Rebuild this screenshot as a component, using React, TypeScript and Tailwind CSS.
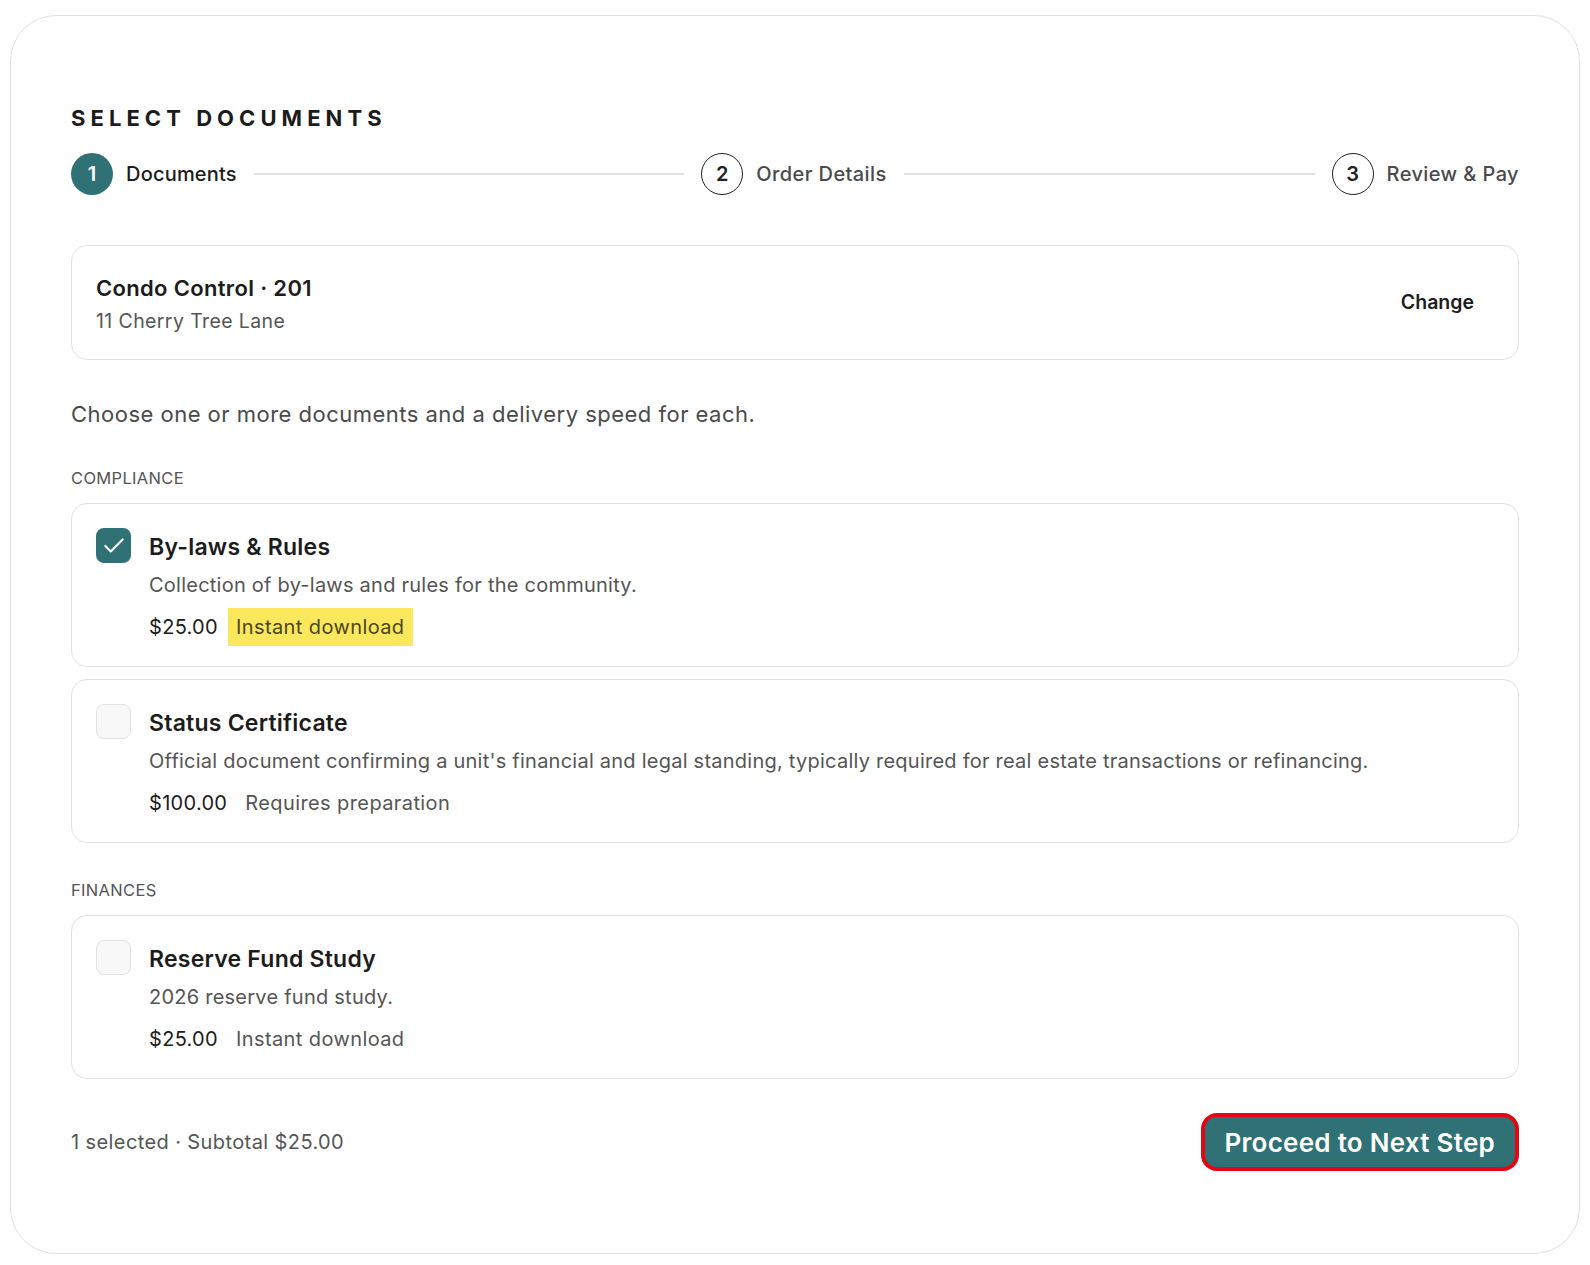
import { Check } from 'lucide-react'

type Doc = {
  title: string
  description: string
  price: string
  delivery: string
  checked?: boolean
}

const groups: { name: string; docs: Doc[] }[] = [
  {
    name: 'Compliance',
    docs: [
      {
        title: 'By-laws & Rules',
        description: 'Collection of by-laws and rules for the community.',
        price: '$25.00',
        delivery: 'Instant download',
        checked: true,
      },
      {
        title: 'Status Certificate',
        description:
          "Official document confirming a unit's financial and legal standing, typically required for real estate transactions or refinancing.",
        price: '$100.00',
        delivery: 'Requires preparation',
      },
    ],
  },
  {
    name: 'Finances',
    docs: [
      {
        title: 'Reserve Fund Study',
        description: '2026 reserve fund study.',
        price: '$25.00',
        delivery: 'Instant download',
      },
    ],
  },
]

function Step({ n, label, active, last }: { n: number; label: string; active?: boolean; last?: boolean }) {
  return (
    <div className={last ? 'flex items-center gap-[13px] shrink-0' : 'flex flex-1 items-center gap-[13px]'}>
      <span
        className={
          active
            ? 'grid place-items-center w-[42px] h-[42px] shrink-0 rounded-full bg-[#2f7174] text-white text-[20px] font-semibold'
            : 'grid place-items-center w-[42px] h-[42px] shrink-0 rounded-full border-[1.5px] border-[#222] text-[#222] text-[20px] font-semibold'
        }
      >
        {n}
      </span>
      <span
        className={
          active
            ? 'shrink-0 text-[20px] font-medium tracking-[0.01em] text-[#1c1c1c]'
            : 'shrink-0 text-[20px] font-medium tracking-[0.02em] text-[#4a4a4a]'
        }
      >
        {label}
      </span>
      {!last && <span className="ml-[4px] mr-[17px] h-[2px] flex-1 bg-[#e2e2e2]" />}
    </div>
  )
}

function DocCard({ doc }: { doc: Doc }) {
  return (
    <div className="flex gap-[18px] rounded-[16px] border border-[#e2e2e2] bg-white pl-[24px] pr-6 pt-[24px] pb-[20px]">
      {doc.checked ? (
        <span className="grid place-items-center w-[35px] h-[35px] shrink-0 rounded-[8px] bg-[#2f7174] text-white">
          <Check className="w-[26px] h-[26px]" strokeWidth={2} />
        </span>
      ) : (
        <span className="w-[35px] h-[35px] shrink-0 rounded-[8px] border border-[#e3e3e3] bg-[#f8f8f8]" />
      )}
      <div className="flex flex-col">
        <div className="text-[23px] leading-[38px] font-semibold tracking-[0.01em] text-[#1c1c1c]">{doc.title}</div>
        <div className="text-[20px] leading-[38px] tracking-[0.012em] text-[#555]">{doc.description}</div>
        <div className="flex items-center gap-[10px] mt-[4px]">
          <span className="text-[20px] leading-[38px] tracking-[0.015em] text-[#1c1c1c]">{doc.price}</span>
          <span
            className={
              doc.checked
                ? 'text-[20px] leading-[38px] tracking-[0.02em] px-[8px] bg-[#fbe75c] text-[#4a4520]'
                : 'text-[20px] leading-[38px] tracking-[0.02em] px-[8px] text-[#555]'
            }
          >
            {doc.delivery}
          </span>
        </div>
      </div>
    </div>
  )
}

export default function App() {
  return (
    <div className="min-h-screen bg-white p-[10px] pt-[15px] font-['Inter',sans-serif]">
      <div className="rounded-[46px] border border-[#e0e0e0] bg-white px-[60px] pt-[91px] pb-[82px]">
        <h1 className="text-[22px] font-bold tracking-[0.23em] text-[#1c1c1c] leading-none">SELECT DOCUMENTS</h1>

        {/* stepper */}
        <div className="mt-[24px] flex items-center">
          <Step n={1} label="Documents" active />
          <Step n={2} label="Order Details" />
          <Step n={3} label="Review & Pay" last />
        </div>

        {/* property */}
        <div className="mt-[50px] flex items-center justify-between rounded-[16px] border border-[#e2e2e2] px-6 h-[115px]">
          <div className="pt-[3px]">
            <div className="text-[22px] font-semibold tracking-[0.015em] text-[#1c1c1c] leading-[30px]">Condo Control · 201</div>
            <div className="mt-[3px] text-[19.5px] tracking-[0.02em] text-[#555] leading-[30px]">11 Cherry Tree Lane</div>
          </div>
          <button className="pr-[20px] text-[19.5px] font-semibold text-[#1c1c1c]">Change</button>
        </div>

        <p className="mt-[39px] text-[22px] tracking-[0.022em] text-[#4a4a4a] leading-[30px]">
          Choose one or more documents and a delivery speed for each.
        </p>

        {groups.map((g, i) => (
          <div key={g.name} className={i === 0 ? 'mt-[38px]' : 'mt-[36px]'}>
            <div className="text-[16.5px] uppercase tracking-[0.02em] text-[#555] leading-[22px]">{g.name}</div>
            <div className="mt-[14px] flex flex-col gap-[12px]">
              {g.docs.map((d) => (
                <DocCard key={d.title} doc={d} />
              ))}
            </div>
          </div>
        ))}

        {/* footer */}
        <div className="mt-[34px] flex items-center justify-between">
          <span className="text-[20px] tracking-[0.02em] text-[#555]">1 selected · Subtotal $25.00</span>
          <button className="h-[58px] px-[20px] rounded-[16px] border-[4px] border-[#e30613] bg-[#2f7174] text-white text-[26px] font-semibold tracking-[0.01em]">
            Proceed to Next Step
          </button>
        </div>
      </div>
    </div>
  )
}
